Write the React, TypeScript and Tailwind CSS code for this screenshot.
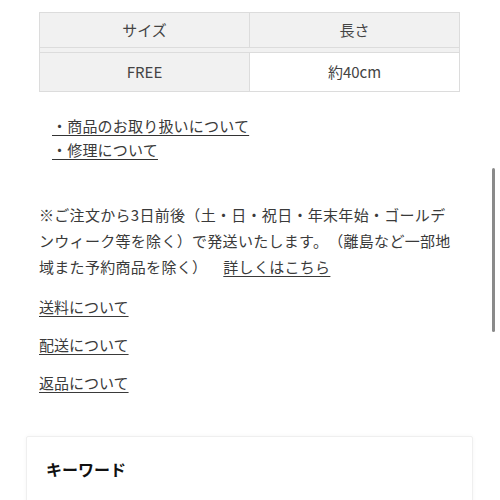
import React from "react";

const font = { fontFamily: '"Noto Sans CJK JP", "Noto Sans", sans-serif' };

export default function App() {
  return (
    <div
      className="relative w-[500px] h-[500px] overflow-hidden bg-white text-[#3a3a3a] [text-spacing-trim:space-all]"
      style={font}
    >
      {/* table */}
      <div className="ml-[39px] mt-[12px] w-[421px] border border-[#dcdcdc] text-[15px] text-[#444]">
        <div className="flex h-[35px] bg-[#f1f1f1] border-b border-[#dcdcdc]">
          <div className="w-[210px] flex items-center justify-center border-r border-[#dcdcdc]">
            サイズ
          </div>
          <div className="flex-1 flex items-center justify-center">長さ</div>
        </div>
        <div className="h-[5px] bg-[#f1f1f1] border-b border-[#dcdcdc]" />
        <div className="flex h-[38px]">
          <div className="w-[210px] flex items-center justify-center bg-[#f1f1f1] border-r border-[#dcdcdc]">
            FREE
          </div>
          <div className="flex-1 flex items-center justify-center bg-white">
            約40cm
          </div>
        </div>
      </div>

      {/* links */}
      <div className="ml-[52px] mt-[22px] flex flex-col text-[15px] leading-[24px] tracking-[0.2px]">
        <span className="underline underline-offset-[3px] decoration-[#333] w-fit">
          ・商品のお取り扱いについて
        </span>
        <span className="underline underline-offset-[3px] decoration-[#333] w-fit">
          ・修理について
        </span>
      </div>

      {/* note */}
      <p className="ml-[39px] mt-[40px] w-[440px] text-[15px] leading-[26px] tracking-[0.3px] whitespace-nowrap">
        ※ご注文から3日前後（土・日・祝日・年末年始・ゴールデ
        <br />
        ンウィーク等を除く）で発送いたします。（離島など一部地
        <br />
        域また予約商品を除く）
        <span className="ml-[16px] underline underline-offset-[3px]">
          詳しくはこちら
        </span>
      </p>

      <div className="ml-[39px] mt-[15px] flex flex-col gap-[14px] text-[15px] leading-[24px]">
        <span className="underline underline-offset-[3px] w-fit">送料について</span>
        <span className="underline underline-offset-[3px] w-fit">配送について</span>
        <span className="underline underline-offset-[3px] w-fit">返品について</span>
      </div>

      {/* keyword card */}
      <div className="ml-[26px] mt-[41px] w-[447px] h-[120px] border border-[#efefef] rounded-[2px] shadow-[0_0_4px_rgba(0,0,0,0.04)] px-[19px] pt-[20px]">
        <h3 className="text-[16px] font-bold text-[#111]">キーワード</h3>
      </div>

      {/* scrollbar */}
      <div className="absolute left-[492px] top-[168px] w-[3px] h-[164px] rounded-full bg-[#8a8a8a]" />
    </div>
  );
}
